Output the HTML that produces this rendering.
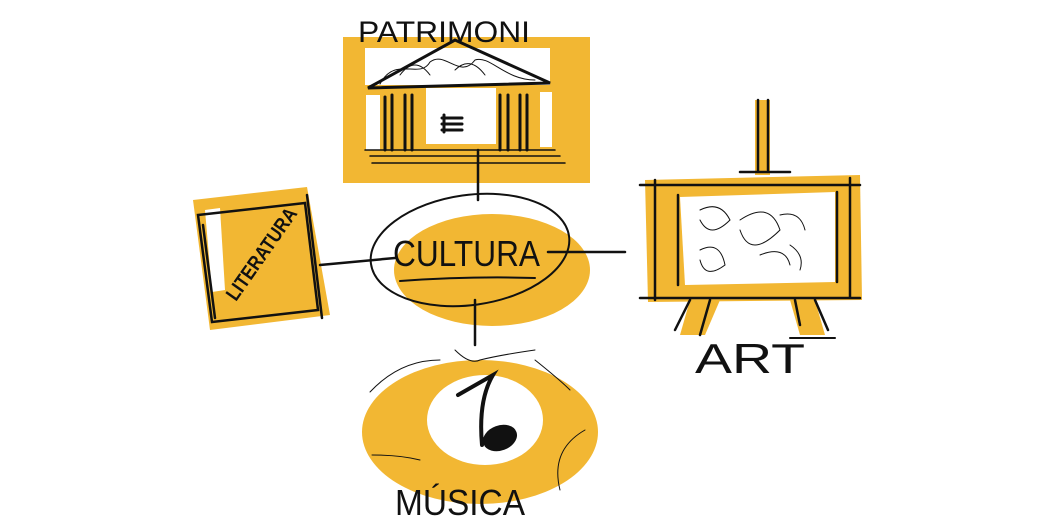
<!DOCTYPE html>
<html><head><meta charset="utf-8"><style>
html,body{margin:0;padding:0;background:#fff;width:1050px;height:525px;overflow:hidden}
svg{display:block}
text{font-family:"Liberation Sans",sans-serif;fill:#111}
</style></head><body>
<svg width="1050" height="525" viewBox="0 0 1050 525" xmlns="http://www.w3.org/2000/svg">
<g fill="#F2B733">
<rect x="343" y="37" width="247" height="146"/>
<polygon points="193,200 307,187 330,315 210,330"/>
<ellipse cx="492" cy="270" rx="98" ry="56"/>
<ellipse cx="480" cy="432" rx="118" ry="72"/>
<rect x="755" y="100" width="15" height="75"/>
<polygon points="645,180 860,175 862,300 648,302"/>
<polygon points="690,300 720,300 705,335 680,335"/>
<polygon points="790,300 815,300 825,335 800,335"/>
</g>
<g fill="#fff">
<polygon points="365,48 550,48 550,85 365,85"/>
<rect x="366" y="95" width="14" height="55"/>
<rect x="426" y="88" width="70" height="56"/>
<rect x="540" y="92" width="12" height="55"/>
<polygon points="205,210 220,208 225,290 212,292"/>
<polygon points="680,197 835,192 835,282 685,285"/>
<ellipse cx="485" cy="420" rx="58" ry="45"/>
</g>
<g stroke="#111" fill="none" stroke-linecap="round">
<path d="M368,88 L455,40 L550,83 Z" stroke-width="3"/>
<path d="M380,84 C395,55 420,80 430,62 C445,50 460,80 475,60 C490,55 505,80 535,80 M400,75 q15,-20 30,0 M455,70 q15,-15 30,5" stroke-width="1"/>
<path d="M385,97 V150 M392,95 V150 M405,95 V150 M412,95 V150 M500,95 V150 M508,95 V150 M520,95 V150 M527,95 V150" stroke-width="3"/>
<path d="M365,150 H555 M370,156 H560 M372,163 H565" stroke-width="1.5"/>
<path d="M442,118 H462 M442,124 H462 M442,130 H462 M444,115 V132" stroke-width="3"/>
<path d="M478,150 V200 M475,300 V345 M320,265 L395,258 M548,252 H625" stroke-width="2.5"/>
<ellipse cx="470" cy="250" rx="100" ry="55" stroke-width="2" transform="rotate(-8 470 250)"/>
<path d="M400,281 Q470,276 535,278" stroke-width="2"/>
<path d="M198,215 L305,203 L318,310 L212,322 Z M203,225 L215,318 M307,195 L322,318" stroke-width="2.5"/>
<path d="M455,350 Q470,365 480,360 Q500,355 535,350 M370,392 Q400,360 440,360 M535,360 Q560,380 570,390 M585,430 Q550,450 560,490 M372,455 Q400,455 420,460" stroke-width="1"/>
<path d="M458,395 L493,375 Q478,400 482,445" stroke-width="4"/>
<ellipse cx="500" cy="438" rx="17" ry="12" fill="#111" transform="rotate(-20 500 438)"/>
<path d="M758,100 V172 M768,100 V170 M740,172 H790 M640,185 H860 M640,298 H860 M655,180 V300 M850,178 V298 M678,195 V285 M837,192 V282 M690,300 L675,330 M710,300 L700,335 M795,300 L800,325 M815,300 L828,330" stroke-width="2.5"/>
<path d="M700,210 q20,-10 30,10 q-20,20 -30,0 M740,220 q30,-20 40,10 q-30,30 -40,0 M780,215 q20,-5 25,15 M700,250 q20,-10 25,15 q-20,15 -25,-5 M760,255 q25,-10 30,10 M790,245 q15,10 10,25" stroke-width="1"/>
<path d="M790,338 H835" stroke-width="2"/>
</g>
<text x="358" y="42" font-size="30" textLength="172" lengthAdjust="spacingAndGlyphs">PATRIMONI</text>
<text x="393" y="266" font-size="36" textLength="147" lengthAdjust="spacingAndGlyphs">CULTURA</text>
<text x="395" y="515" font-size="36" textLength="130" lengthAdjust="spacingAndGlyphs">MÚSICA</text>
<text x="695" y="373" font-size="42" textLength="110" lengthAdjust="spacingAndGlyphs">ART</text>
<text transform="translate(236,302) rotate(-55)" font-size="20" font-weight="bold" textLength="108" lengthAdjust="spacingAndGlyphs">LITERATURA</text>
</svg>
</body></html>
